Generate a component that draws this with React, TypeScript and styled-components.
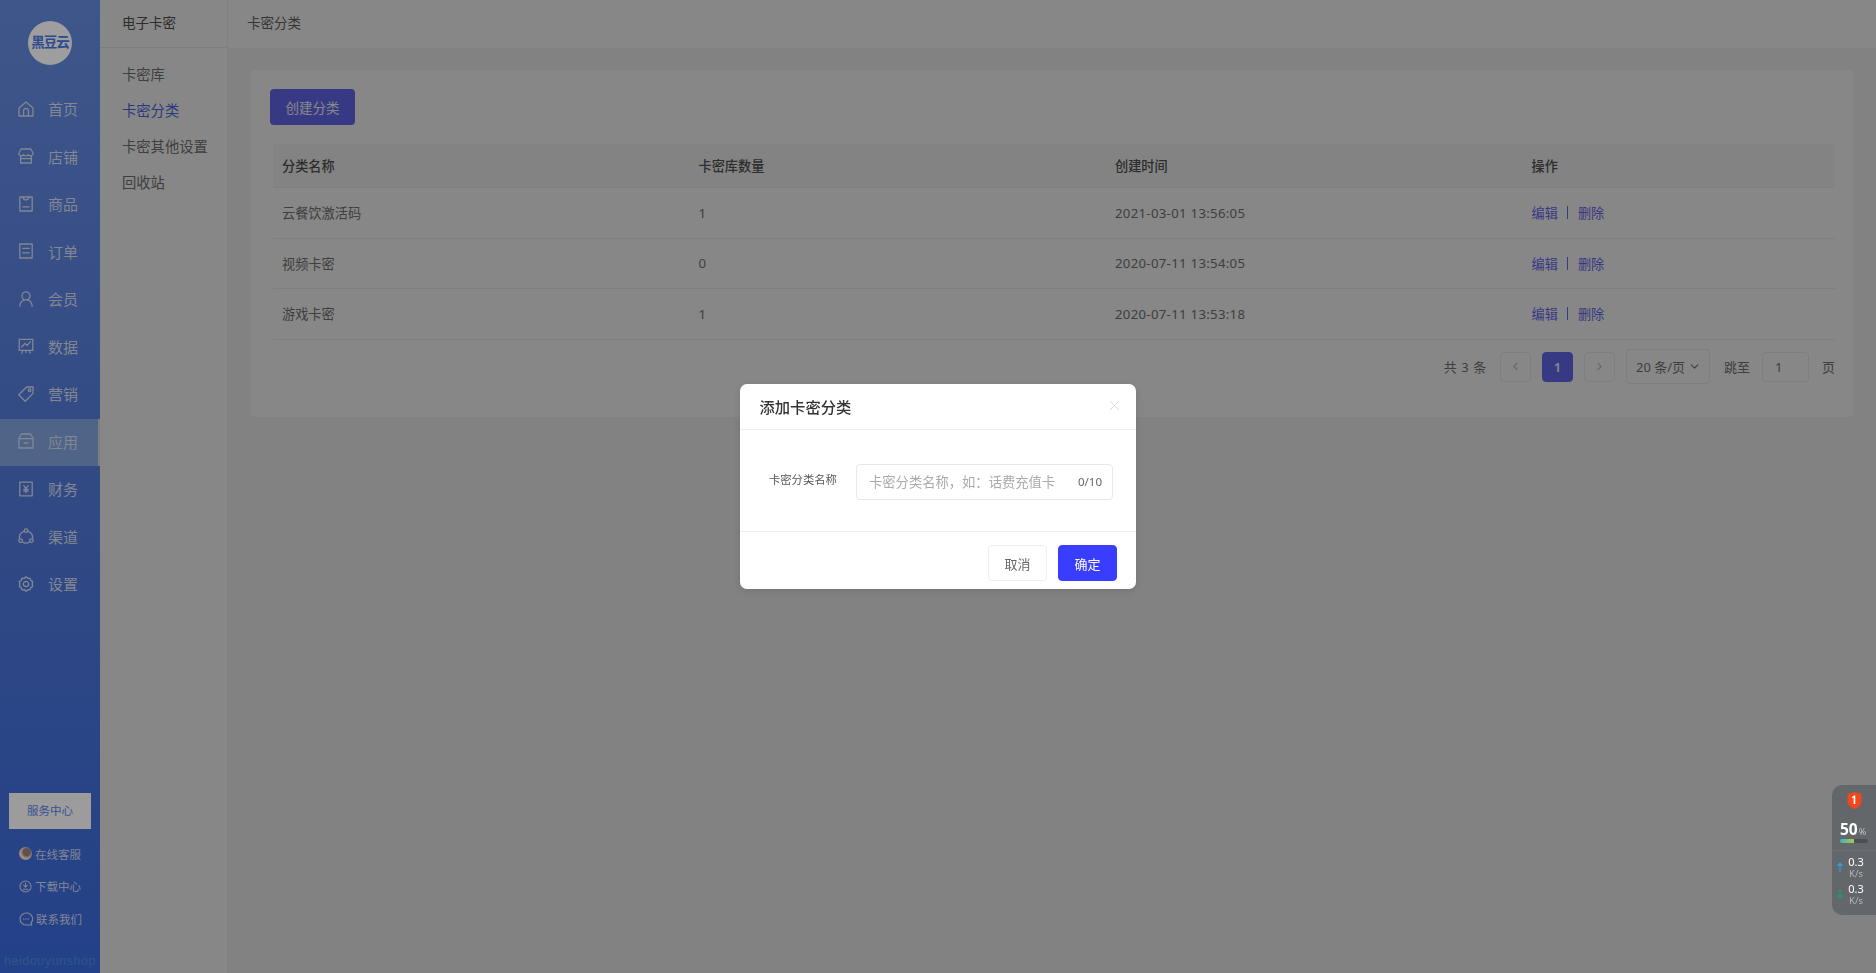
import React from 'react'
import styled, { createGlobalStyle } from 'styled-components'
import { X, ChevronLeft, ChevronRight, ChevronDown } from 'lucide-react'

const GlobalStyle = createGlobalStyle`
  html, body {
    margin: 0;
    height: 100%;
    overflow: hidden;
    font-family: "Noto Sans", "Noto Sans CJK SC", "Liberation Sans", sans-serif;
    font-size: 13px;
    color: #666;
  }
  * { box-sizing: border-box; }
`

const Page = styled.div`
  display: grid;
  grid-template-columns: 100px 128px 1fr;
  height: 973px;
  background: #f5f5f5;
`

/* sidebar sits above the mask, so its colours are the final ones */
const Sidebar = styled.aside`
  position: relative;
  z-index: 20;
  display: flex;
  flex-direction: column;
  background: linear-gradient(180deg, #3e5689 0%, #324a84 50%, #234188 100%);
  color: #828794;
`

const Logo = styled.div`
  width: 44px;
  height: 44px;
  margin: 21px auto 21px;
  border-radius: 50%;
  background: #9e9e9e;
  color: #2c4a90;
  font-size: 13.5px;
  font-weight: 700;
  letter-spacing: -1px;
  line-height: 42px;
  text-align: center;
  white-space: nowrap;
`

const NavItem = styled.div<{ $active?: boolean }>`
  display: flex;
  align-items: center;
  gap: 14px;
  height: 47.5px;
  padding: 0 0 2px 18px;
  font-size: 15px;
  background: ${(p) => (p.$active ? '#506487' : 'transparent')};
  border-right: 2px solid ${(p) => (p.$active ? '#7b7f85' : 'transparent')};
  svg { flex-shrink: 0; }
`

const ServiceButton = styled.div`
  margin: auto 9px 14px;
  height: 36px;
  line-height: 36px;
  background: #9c9c9c;
  color: #37508f;
  font-size: 11.5px;
  text-align: center;
`

const HelpList = styled.div`
  display: flex;
  flex-direction: column;
  gap: 11.5px;
  padding-left: 19px;
  margin-bottom: 25px;
`

const HelpItem = styled.div`
  display: flex;
  align-items: center;
  gap: 3px;
  height: 21px;
  font-size: 11.5px;
  white-space: nowrap;
`

const Avatar = styled.span`
  width: 13px;
  height: 13px;
  border-radius: 50%;
  background: radial-gradient(circle at 60% 40%, #5c5050 0 30%, #a08c82 55%, #8c7f7a 100%);
`

const Watermark = styled.div`
  padding-left: 4px;
  height: 19px;
  font-family: "Liberation Sans", sans-serif;
  font-size: 12.5px;
  letter-spacing: 0.55px;
  color: #2d5887;
`

const SubNav = styled.nav`
  background: #fff;
  border-right: 1px solid #f2f2f2;
`

const SubHeader = styled.div`
  height: 48px;
  padding-left: 22px;
  line-height: 47px;
  font-size: 13.5px;
  color: #555;
  border-bottom: 1px solid #eee;
`

const SubList = styled.div`
  display: flex;
  flex-direction: column;
  padding-top: 9px;
`

const SubItem = styled.div<{ $active?: boolean }>`
  height: 36px;
  padding-left: 22px;
  line-height: 36px;
  font-size: 14.3px;
  color: ${(p) => (p.$active ? '#4f6cf0' : '#777')};
`

const Main = styled.main`
  display: flex;
  flex-direction: column;
  min-width: 0;
`

const TopBar = styled.div`
  height: 48px;
  padding-left: 19px;
  line-height: 46px;
  font-size: 13.5px;
  color: #666;
  background: #fff;
`

const Content = styled.div`
  padding: 22px 23px 0;
`

const Card = styled.section`
  height: 347px;
  padding: 19px 18px 0 19px;
  background: #fff;
  border-radius: 4px;
`

const PrimaryButton = styled.button`
  display: block;
  width: 85px;
  height: 36px;
  padding: 0;
  border: 0;
  border-radius: 4px;
  background: #6a6cfb;
  color: #fff;
  font: inherit;
  font-size: 13.5px;
`

const Table = styled.div`
  margin: 19px 0 0 3px;
`

const Row = styled.div<{ $head?: boolean }>`
  display: grid;
  grid-template-columns: 416.5px 416.5px 416.5px 1fr;
  align-items: center;
  height: ${(p) => (p.$head ? '44px' : '50.5px')};
  padding-left: 9px;
  font-size: 13.2px;
  font-weight: ${(p) => (p.$head ? 500 : 400)};
  color: ${(p) => (p.$head ? '#555' : '#777')};
  background: ${(p) => (p.$head ? '#f7f7f7' : 'transparent')};
  border-bottom: 1px solid #f0f0f0;
`

const TimeCell = styled.span`
  letter-spacing: 0.3px;
`

const Actions = styled.div`
  display: flex;
  align-items: center;
  color: #6a6cfb;
`

const Divider = styled.span`
  width: 1px;
  height: 13px;
  margin: 0 9.5px;
  background: #6a6cfb;
`

const Pager = styled.div`
  display: flex;
  align-items: center;
  justify-content: flex-end;
  height: 50px;
  margin-top: 2px;
  font-size: 13px;
  color: #777;
`

const PageBox = styled.span<{ $current?: boolean }>`
  display: flex;
  align-items: center;
  justify-content: center;
  width: 31px;
  height: 30px;
  margin-right: 11px;
  border: 1px solid ${(p) => (p.$current ? '#6a6cfb' : '#eee')};
  border-radius: 4px;
  background: ${(p) => (p.$current ? '#6a6cfb' : '#fff')};
  color: ${(p) => (p.$current ? '#fff' : '#c4c4c4')};
  font-size: 13px;
  font-weight: ${(p) => (p.$current ? 600 : 400)};
`

const PageSelect = styled.span`
  display: flex;
  align-items: center;
  justify-content: space-between;
  width: 84px;
  height: 35px;
  margin-right: 14px;
  padding: 0 8px 0 9px;
  border: 1px solid #eee;
  border-radius: 4px;
  white-space: nowrap;
`

const PageInput = styled.span`
  width: 47px;
  height: 30px;
  margin: 0 13px 0 12px;
  padding-left: 12px;
  line-height: 28px;
  border: 1px solid #eee;
  border-radius: 4px;
`

const Total = styled.span`
  margin-right: 13px;
  letter-spacing: 0.6px;
`

const Mask = styled.div`
  position: fixed;
  inset: 0;
  z-index: 10;
  display: flex;
  justify-content: center;
  padding-top: 384px;
  background: rgba(0, 0, 0, 0.47);
`

const Modal = styled.div`
  width: 396px;
  height: 205px;
  border-radius: 7px;
  background: #fff;
  box-shadow: 0 2px 10px rgba(0, 0, 0, 0.12);
`

const ModalHead = styled.div`
  display: flex;
  align-items: center;
  justify-content: space-between;
  height: 46px;
  padding: 0 13px 2px 19.5px;
  border-bottom: 1px solid #eee;
  font-size: 15.3px;
  font-weight: 500;
  color: #333;
  svg { color: #d4d4d4; }
`

const ModalBody = styled.div`
  display: flex;
  align-items: flex-start;
  height: 102px;
  padding: 34px 23px 0 29px;
  border-bottom: 1px solid #eee;
`

const FieldLabel = styled.label`
  width: 87px;
  padding-top: 7px;
  font-size: 11.3px;
  color: #555;
`

const Field = styled.div`
  display: flex;
  align-items: center;
  justify-content: space-between;
  flex: 1;
  height: 36px;
  padding: 0 10px 1px 12px;
  border: 1px solid #e8e8e8;
  border-radius: 4px;
  font-size: 13.3px;
  color: #aaa;
  white-space: nowrap;
`

const Counter = styled.span`
  font-size: 11.5px;
  color: #666;
`

const ModalFoot = styled.div`
  display: flex;
  justify-content: flex-end;
  gap: 11px;
  padding: 13px 19px 0 0;
`

const DialogButton = styled.button<{ $primary?: boolean }>`
  width: 59px;
  height: 36px;
  padding: 0;
  border: 1px solid ${(p) => (p.$primary ? '#383dff' : '#eee')};
  border-radius: 4px;
  background: ${(p) => (p.$primary ? '#383dff' : '#fff')};
  color: ${(p) => (p.$primary ? '#fff' : '#666')};
  font: inherit;
  font-size: 13px;
`

const Widget = styled.div`
  position: fixed;
  right: 0;
  top: 785px;
  z-index: 30;
  width: 44px;
  height: 130px;
  padding-top: 7px;
  border-radius: 10px 0 0 10px;
  background: #63666a;
  color: #fff;
  font-family: "Noto Sans", "Liberation Sans", sans-serif;
`

const Shield = styled.svg`
  display: block;
  margin: 0 auto;
`

const Percent = styled.div`
  margin-top: 11px;
  height: 19px;
  padding-left: 8px;
  font-size: 15.5px;
  font-weight: 700;
  line-height: 19px;
  span { font-size: 9px; font-weight: 400; color: #c4c4c4; margin-left: 1px; }
`

const Meter = styled.div`
  width: 28px;
  height: 4px;
  margin-left: 8px;
  border-radius: 2px;
  background: linear-gradient(90deg, #3cb5bf 0, #a8c94a 50%, #4b4e55 50%);
`

const WidgetRule = styled.div`
  height: 1px;
  margin: 7px 0 2px;
  background: #6c6f73;
`

const Speed = styled.div`
  display: flex;
  align-items: center;
  height: 27px;
  padding-left: 5px;
  text-align: center;
`

const SpeedText = styled.div`
  width: 20px;
  margin-left: 3px;
  font-size: 11px;
  line-height: 14px;
  small { display: block; font-size: 9.5px; line-height: 10px; color: #b4b4b4; }
`

const Glyph = ({ size = 16, children }: { size?: number; children: React.ReactNode }) => (
  <svg width={size} height={size} viewBox="0 0 16 16" fill="none" stroke="currentColor" strokeWidth="1.3" strokeLinejoin="round" strokeLinecap="round">
    {children}
  </svg>
)

const icons: Record<string, React.ReactNode> = {
  home: <path d="M1 7 8 .9 15 7v8H1zM5.6 15V9.8a2.400 2.400 0 0 1 4.800 0V15" />,
  shop: <path d="M3.200 1h9.600l2.400 4.200a2.600 2.600 0 0 1-4.800 1.400 2.800 2.800 0 0 1-4.800 0A2.600 2.600 0 0 1 .8 5.200zM2.600 8v7h10.800V8M2.600 10.600h10.800" />,
  goods: <path d="M1.800 1h12.400v14H1.800zM5.200 1.200c0 3.600 5.600 3.600 5.600 0M4.800 10.800h6.400" />,
  order: <path d="M1.800 1h12.400v14H1.800zM4.800 5.400h6.400M4.800 9.800h6.400" />,
  member: <path d="M8 .9a4 4 0 1 1 0 8 4 4 0 0 1 0-8zM1.800 15.200c.3-4 2.800-6.300 6.200-6.300s5.900 2.300 6.200 6.300" />,
  data: <path d="M1.200 1.400h13.600v11H1.200zM3.800 9l3.200-3.600 2.200 2 3.200-3.800M4.800 12.400l-1 2.800M11.200 12.400l1 2.800M8 12.400v2" />,
  tag: <path d="M8.600 1h6.400v6.400L7.200 15.200.8 8.800zM11.600 3a1.300 1.300 0 1 1 0 2.600 1.300 1.300 0 0 1 0-2.600z" />,
  app: <path d="M3.400 1h9.200l2.400 4.200V15H1V5.200zM1 5.600h14M6 9.800h4" />,
  finance: <path d="M1.800 1.200h12.400v13.600H1.800zM5.800 4.600 8 7.400l2.200-2.800M8 7.400v4.200M5.800 8.400h4.400M5.800 10.200h4.400" />,
  channel: <path d="M8 .8a1.800 1.800 0 1 1 0 3.600 1.800 1.800 0 0 1 0-3.600zM2.600 10.800a1.800 1.800 0 1 1 0 3.600 1.800 1.800 0 0 1 0-3.600zM13.400 10.800a1.800 1.800 0 1 1 0 3.600 1.800 1.800 0 0 1 0-3.600zM5.800 3.400a6 6 0 0 0-4.200 7.200M10.200 3.400a6 6 0 0 1 4.200 7.200M4.400 14a7 7 0 0 0 7.200 0" />,
  setting: <path d="M8 .6l1.600 1.700 2.400-.2.700 2.300 2 1.200-.5 2.400.5 2.400-2 1.200-.7 2.300-2.400-.2L8 15.400l-1.600-1.700-2.400.2-.7-2.300-2-1.200.5-2.400-.5-2.400 2-1.200.7-2.300 2.400.2zM8 5.400a2.600 2.600 0 1 1 0 5.200 2.600 2.600 0 0 1 0-5.200z" />,
}

const navItems = [
  ['home', '首页'],
  ['shop', '店铺'],
  ['goods', '商品'],
  ['order', '订单'],
  ['member', '会员'],
  ['data', '数据'],
  ['tag', '营销'],
  ['app', '应用'],
  ['finance', '财务'],
  ['channel', '渠道'],
  ['setting', '设置'],
]

const subItems = ['卡密库', '卡密分类', '卡密其他设置', '回收站']

const rows = [
  { name: '云餐饮激活码', count: 1, time: '2021-03-01 13:56:05' },
  { name: '视频卡密', count: 0, time: '2020-07-11 13:54:05' },
  { name: '游戏卡密', count: 1, time: '2020-07-11 13:53:18' },
]

export default function App() {
  return (
    <>
      <GlobalStyle />
      <Page>
        <Sidebar>
          <Logo>黑豆云</Logo>
          {navItems.map(([icon, label]) => (
            <NavItem key={label} $active={label === '应用'}>
              <Glyph>{icons[icon]}</Glyph>
              {label}
            </NavItem>
          ))}
          <ServiceButton>服务中心</ServiceButton>
          <HelpList>
            <HelpItem><Avatar />在线客服</HelpItem>
            <HelpItem>
              <Glyph size={13}>
                <circle cx="8" cy="8" r="6.8" />
                <path d="M8 3.600v5M5.800 6.600 8 8.800l2.200-2.200M5 11.400h6" />
              </Glyph>
              下载中心
            </HelpItem>
            <HelpItem>
              <Glyph size={14}>
                <path d="M8 1.200a6.800 6.800 0 1 0 0 13.600h6.600l-.9-2.200A6.800 6.800 0 0 0 8 1.200zM5 8h.6M7.700 8h.6M10.400 8h.6" />
              </Glyph>
              联系我们
            </HelpItem>
          </HelpList>
          <Watermark>heidouyunshop</Watermark>
        </Sidebar>

        <SubNav>
          <SubHeader>电子卡密</SubHeader>
          <SubList>
            {subItems.map((item) => (
              <SubItem key={item} $active={item === '卡密分类'}>{item}</SubItem>
            ))}
          </SubList>
        </SubNav>

        <Main>
          <TopBar>卡密分类</TopBar>
          <Content>
            <Card>
              <PrimaryButton>创建分类</PrimaryButton>
              <Table>
                <Row $head>
                  <span>分类名称</span>
                  <span>卡密库数量</span>
                  <span>创建时间</span>
                  <span>操作</span>
                </Row>
                {rows.map((row) => (
                  <Row key={row.name}>
                    <span>{row.name}</span>
                    <span>{row.count}</span>
                    <TimeCell>{row.time}</TimeCell>
                    <Actions>编辑<Divider />删除</Actions>
                  </Row>
                ))}
              </Table>
              <Pager>
                <Total>共 3 条</Total>
                <PageBox><ChevronLeft size={13} /></PageBox>
                <PageBox $current>1</PageBox>
                <PageBox><ChevronRight size={13} /></PageBox>
                <PageSelect>20 条/页<ChevronDown size={13} /></PageSelect>
                跳至
                <PageInput>1</PageInput>
                页
              </Pager>
            </Card>
          </Content>
        </Main>
      </Page>

      <Mask>
        <Modal>
          <ModalHead>
            添加卡密分类
            <X size={17} strokeWidth={1.2} />
          </ModalHead>
          <ModalBody>
            <FieldLabel>卡密分类名称</FieldLabel>
            <Field>
              卡密分类名称，如：话费充值卡
              <Counter>0/10</Counter>
            </Field>
          </ModalBody>
          <ModalFoot>
            <DialogButton>取消</DialogButton>
            <DialogButton $primary>确定</DialogButton>
          </ModalFoot>
        </Modal>
      </Mask>

      <Widget>
        <Shield width="15" height="17" viewBox="0 0 14 17">
          <path d="M7 0l7 2v8c0 3-3.500 5.500-7 7-3.500-1.500-7-4-7-7V2z" fill="#f0481c" />
          <path d="M7.800 3.500V12H6.100V5.600L4.600 6.400V5L6.500 3.500z" fill="#fff" />
        </Shield>
        <Percent>50<span>%</span></Percent>
        <Meter />
        <WidgetRule />
        <Speed>
          <svg width="6" height="10" viewBox="0 0 6 10"><path d="M3 0l3 4H3.600v6H2.400V4H0z" fill="#29a3e0" /></svg>
          <SpeedText>0.3<small>K/s</small></SpeedText>
        </Speed>
        <Speed>
          <svg width="6" height="10" viewBox="0 0 6 10"><path d="M3 10l3-4H3.600V0H2.400v6H0z" fill="#12a561" /></svg>
          <SpeedText>0.3<small>K/s</small></SpeedText>
        </Speed>
      </Widget>
    </>
  )
}
